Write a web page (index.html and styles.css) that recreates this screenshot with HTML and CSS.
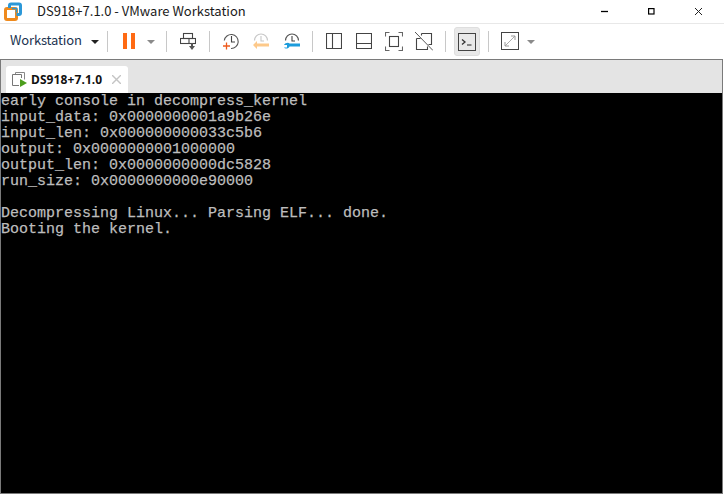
FILE: index.html
```html
<!DOCTYPE html>
<html lang="en">
<head>
<meta charset="utf-8">
<title>DS918+7.1.0 - VMware Workstation</title>
<link rel="stylesheet" href="styles.css">
</head>
<body>
<div class="window">
  <header class="titlebar">
    <svg class="app-logo" width="20" height="22" viewBox="0 0 20 22"><rect x="2.500" y="8.500" width="11" height="11" rx="1.500" fill="none" stroke="#ef8a1d" stroke-width="3"/><path d="M6.500 8V5.500c0-.800.700-1.500 1.500-1.500h8c.800 0 1.500.700 1.500 1.500V13c0 .800-.700 1.500-1.500 1.500h-2.500" fill="none" stroke="#2b98d8" stroke-width="3"/><path d="M9 8.500h4.500v4" fill="none" stroke="#2b98d8" stroke-width="1.600"/></svg>
    <span class="title">DS918+7.1.0 - VMware Workstation</span>
    <div class="caption">
      <svg width="47" height="22" viewBox="0 0 47 22"><path d="M20 11.500h7" stroke="#000" stroke-width="1.300"/></svg>
      <svg width="47" height="22" viewBox="0 0 47 22"><rect x="20.600" y="8.600" width="5.400" height="5.400" fill="none" stroke="#000" stroke-width="1.200"/></svg>
      <svg width="47" height="22" viewBox="0 0 47 22"><path d="M20 8l7 7M27 8l-7 7" stroke="#222" stroke-width="1"/></svg>
    </div>
  </header>
  <nav class="toolbar">
    <span class="menu">Workstation</span>
    <span class="caret dark ml-10"></span>
    <span class="sep ml-8"></span>
    <span class="pause ml-15"><i></i><i></i></span>
    <span class="caret grey ml-12"></span>
    <span class="sep ml-11"></span>
    <svg class="icon ml-13" width="16" height="19" viewBox="0 0 16 19"><g fill="none" stroke="#444" stroke-width="1.100"><rect x="3.500" y="1.500" width="9" height="5"/><rect x="0.500" y="6.500" width="15" height="5"/><path d="M9 6.500v5"/></g><path d="M12 11v4" stroke="#555" stroke-width="2"/><path d="M9 14h6l-3 4z" fill="#555"/></svg>
    <span class="sep ml-13"></span>
    <svg class="icon ml-13" width="16" height="19" viewBox="0 0 16 19"><path d="M1.300 8.500A7 7 0 1 1 8 16.500" fill="none" stroke="#555" stroke-width="1.100"/><path d="M8.500 4v6h3.500" fill="none" stroke="#444" stroke-width="1.100"/><path d="M3.500 10.500v7M0 14h7" stroke="#ee5a1c" stroke-width="1.300"/></svg>
    <svg class="icon ml-14" width="16" height="19" viewBox="0 0 16 19"><path d="M1.500 8.500A6.500 6.500 0 1 1 14.500 8.500" fill="none" stroke="#c8c8c8" stroke-width="1.200"/><path d="M8 4v5h3" fill="none" stroke="#c8c8c8" stroke-width="1.100"/><path d="M4 11.500h12v3H4v2.500l-4-4 4-4z" fill="#fdc98a"/></svg>
    <svg class="icon ml-15" width="16" height="19" viewBox="0 0 16 19"><path d="M1.500 8.500A6.500 6.500 0 1 1 14.500 8.500" fill="none" stroke="#555" stroke-width="1.200"/><path d="M8 4v5h3" fill="none" stroke="#444" stroke-width="1.100"/><path d="M5.500 11.500H16v3H5.500c-1 2.500-4.500 2.500-5.500 1h3v-2.500H0c1-2 4.500-3 5.500-1.500z" fill="#1c9cdc"/></svg>
    <span class="sep ml-12"></span>
    <svg class="icon ml-13" width="16" height="19" viewBox="0 0 16 19"><path d="M.500 1.500h15v15H.500zM6.500 1.500v15" fill="none" stroke="#444" stroke-width="1.100"/></svg>
    <svg class="icon ml-14" width="16" height="19" viewBox="0 0 16 19"><path d="M.500 1.500h15v15H.500zM.500 11.500h15" fill="none" stroke="#444" stroke-width="1.100"/></svg>
    <svg class="icon ml-13" width="18" height="19" viewBox="0 0 18 19"><path d="M.500 4.500v-4h4M13.500.500h4v4M17.500 14.500v4h-4M4.500 18.500h-4v-4" fill="none" stroke="#666" stroke-width="1.100"/><rect x="4.500" y="4.500" width="9" height="10" fill="none" stroke="#444" stroke-width="1.100"/></svg>
    <svg class="icon ml-12" width="18" height="19" viewBox="0 0 18 19"><path d="M1.500 6.500h4M1.500 6.500v11h11v-3M6.500 1.500h10v11h-3M6.500 1.500v2" fill="none" stroke="#444" stroke-width="1.100"/><path d="M0 0l18 18.500" stroke="#555" stroke-width="1"/></svg>
    <span class="sep ml-12"></span>
    <span class="active ml-8"><svg width="18" height="18" viewBox="0 0 18 18"><rect x="0.500" y="0.500" width="17" height="17" fill="none" stroke="#444"/><path d="M4 6.500l3 2.500-3 2.500" fill="none" stroke="#333" stroke-width="1.300"/><path d="M9 12h4.500" stroke="#333" stroke-width="1.100"/></svg></span>
    <span class="sep ml-8"></span>
    <svg class="icon ml-12" width="18" height="19" viewBox="0 0 18 19"><rect x="0.500" y="0.500" width="17" height="17" fill="none" stroke="#444"/><path d="M4 14L14 4" stroke="#aaa"/><path d="M10 4h4v4M4 10v4h4" fill="none" stroke="#999"/></svg>
    <span class="caret grey ml-8"></span>
  </nav>
  <div class="frame">
    <div class="tabbar">
      <div class="tab">
        <svg width="15" height="15" viewBox="0 0 15 15"><path d="M3.500 2.500v-2h9v7" fill="none" stroke="#888"/><path d="M7 13.500H.500v-11h9V6" fill="none" stroke="#777"/><path d="M8 7l7 4-7 4z" fill="#4c9e1c"/></svg>
        <span class="tab-name">DS918+7.1.0</span>
        <svg class="tab-close" width="9" height="9" viewBox="0 0 9 9"><path d="M0 0l9 9M9 0L0 9" stroke="#c4c4c4" stroke-width="1.400"/></svg>
      </div>
    </div>
    <pre class="console">early console in decompress_kernel
input_data: 0x0000000001a9b26e
input_len: 0x000000000033c5b6
output: 0x0000000001000000
output_len: 0x0000000000dc5828
run_size: 0x0000000000e90000

Decompressing Linux... Parsing ELF... done.
Booting the kernel.</pre>
  </div>
</div>
</body>
</html>
```
FILE: styles.css
```css
* { box-sizing: border-box; }
html, body { margin: 0; height: 100%; overflow: hidden; background: #fff; }
.window {
  width: 724px;
  height: 495px;
  padding: 0 1px 1px 0;
  display: flex;
  flex-direction: column;
  font-family: "Noto Sans CJK SC", "Noto Sans", sans-serif;
  color: #222;
}
.titlebar {
  height: 24px;
  flex: none;
  display: flex;
  align-items: flex-start;
  padding-left: 3px;
  margin-right: -1px;
  border-bottom: 1px solid #e8e8e8;
}
.app-logo { display: block; }
.title { margin-left: 14px; font-size: 13px; line-height: 22px; color: #1a1a1a; white-space: nowrap; }
.caption { margin-left: auto; display: flex; padding-right: 2px; }
.caption svg { display: block; }
.toolbar {
  height: 35px;
  flex: none;
  display: flex;
  align-items: center;
  padding-left: 10px;
}
.ml-8 { margin-left: 8px; }
.ml-10 { margin-left: 10px; }
.ml-11 { margin-left: 11px; }
.ml-12 { margin-left: 12px; }
.ml-13 { margin-left: 13px; }
.ml-14 { margin-left: 14px; }
.ml-15 { margin-left: 15px; }
.menu { width: 71px; font-size: 13px; line-height: 18px; letter-spacing: -0.15px; color: #1b3350; white-space: nowrap; margin-bottom: 3px; }
.caret { width: 0; height: 0; flex: none; border-left: 4px solid transparent; border-right: 4px solid transparent; }
.caret.dark { border-top: 4px solid #222; }
.caret.grey { border-top: 4px solid #8a8a8a; }
.sep { width: 1px; height: 21px; background: #c8c8c8; flex: none; }
.pause { display: flex; gap: 4px; height: 19px; padding-top: 1px; flex: none; }
.pause i { display: block; width: 4px; height: 16px; background: #ff6a13; }
.icon { flex: none; display: block; }
.active { width: 26px; height: 29px; flex: none; background: #e9e9e9; border: 1px solid #dedede; border-radius: 3px; display: flex; align-items: center; justify-content: center; }
.frame {
  flex: 1;
  min-height: 0;
  display: flex;
  flex-direction: column;
  border: 1px solid #7a7a7a;
}
.tabbar {
  height: 33px;
  flex: none;
  background: #e4e4e4;
  padding: 6px 0 0 5px;
}
.tab {
  width: 122px;
  height: 27px;
  background: #fff;
  border-radius: 3px 3px 0 0;
  display: flex;
  align-items: center;
  padding-left: 6px;
}
.tab-name { margin-left: 4px; font-size: 12px; letter-spacing: 0.1px; font-weight: 700; color: #111; font-family: "Noto Sans", sans-serif; white-space: nowrap; }
.tab-close { margin-left: 10px; }
.console {
  flex: 1;
  margin: 0;
  padding: 1px 0 0;
  background: #000;
  color: #bdbdbd;
  font-family: "Liberation Mono", monospace;
  font-size: 15px;
  line-height: 16px;
  -webkit-text-stroke: 0.25px #bdbdbd;
  overflow: hidden;
}
```
